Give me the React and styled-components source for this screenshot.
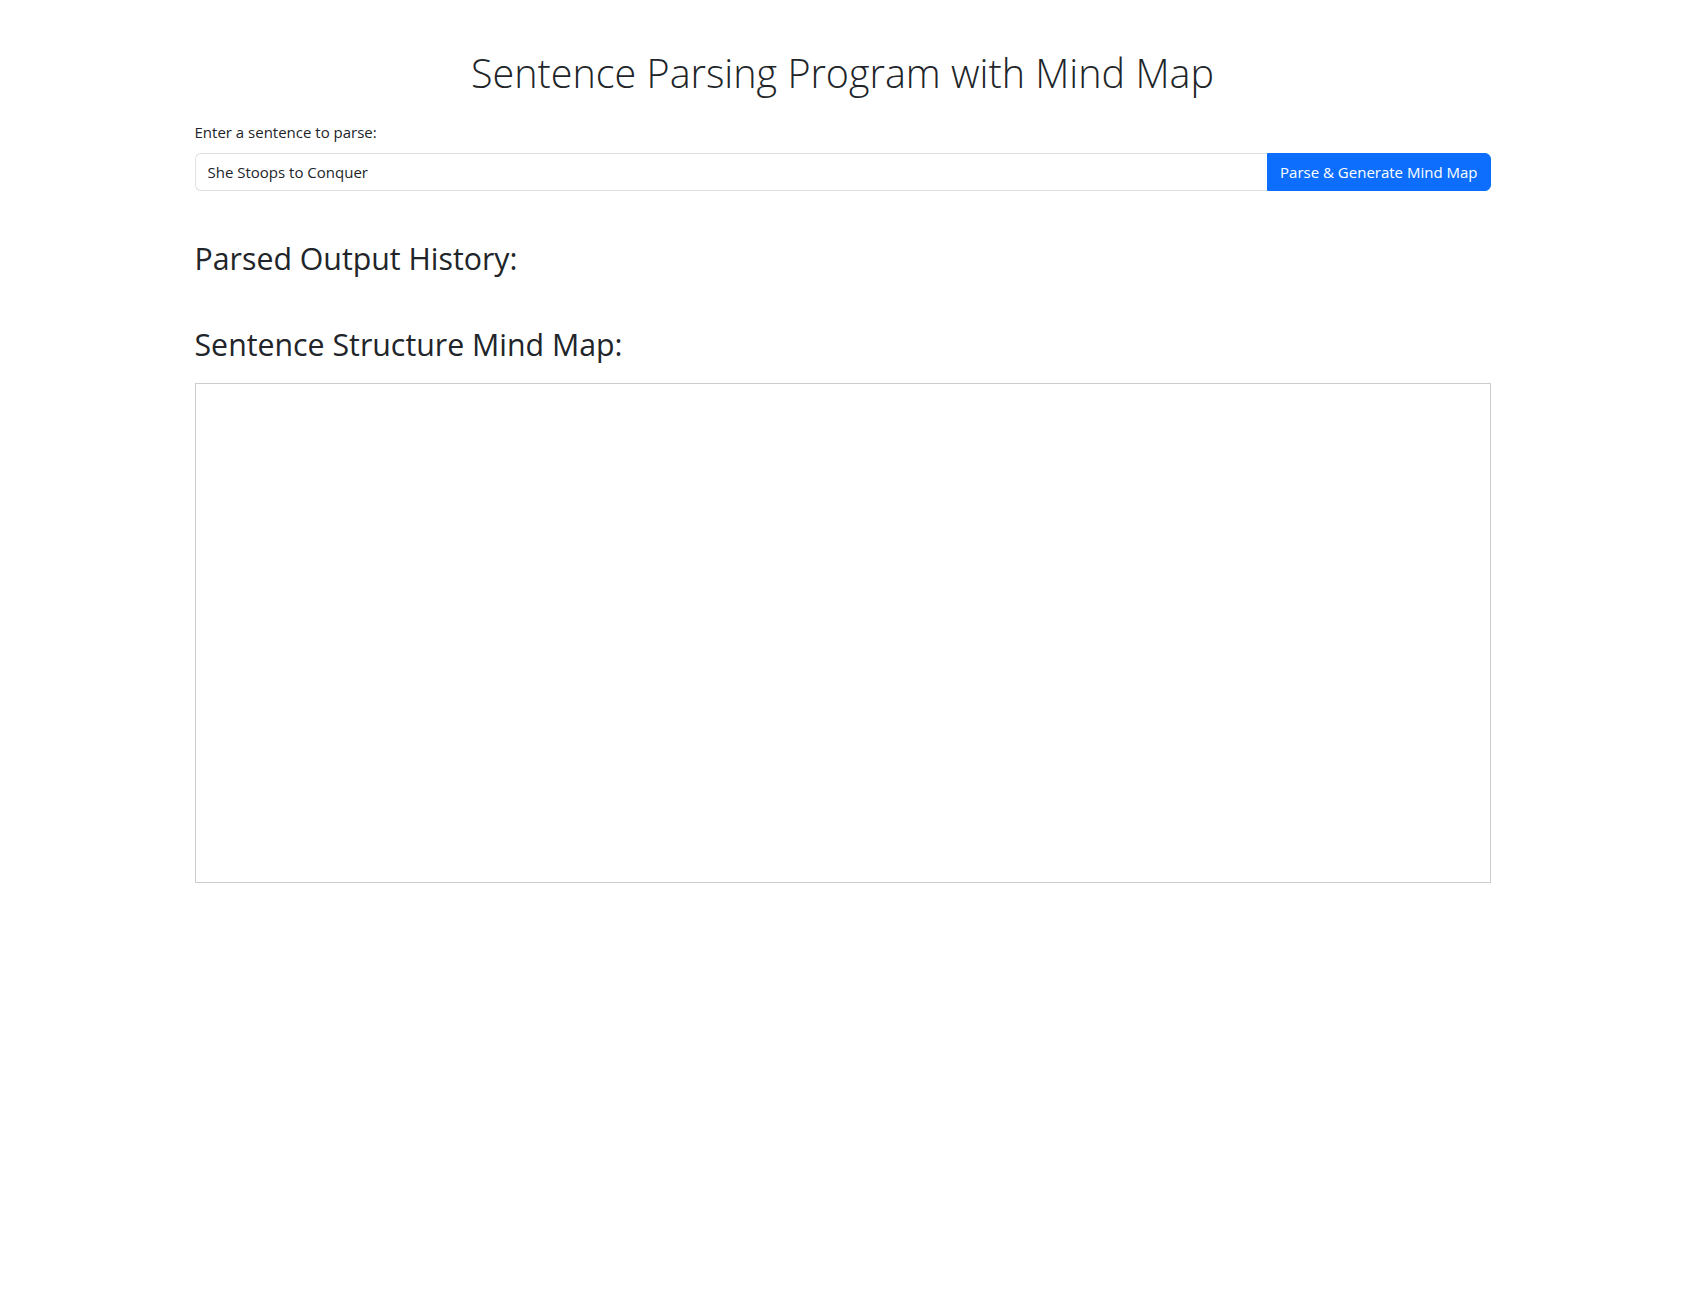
import React, { useState } from 'react'
import styled, { createGlobalStyle } from 'styled-components'

const GlobalStyle = createGlobalStyle`
  *, *::before, *::after {
    box-sizing: border-box;
  }
  body {
    margin: 0;
    background: #fff;
    color: #212529;
    font-family: "Open Sans", "Noto Sans", sans-serif;
    font-size: 16px;
    line-height: 1.5;
  }
`

const Container = styled.div`
  max-width: 1320px;
  margin: 0 auto;
  padding: 50px 12px 0;
`

const Title = styled.h1`
  margin: 0 0 24px;
  text-align: center;
  font-size: 39.5px;
  font-weight: 300;
  line-height: 1.2;
`

const Label = styled.label`
  display: block;
  margin-bottom: 9px;
  font-size: 15px;
`

const InputGroup = styled.div`
  display: flex;
  align-items: stretch;
  margin-bottom: 50px;
`

const Input = styled.input`
  flex: 1;
  min-width: 0;
  height: 38px;
  padding: 6px 12px;
  font: inherit;
  font-size: 15px;
  color: #212529;
  border: 1px solid #dee2e6;
  border-right: none;
  border-radius: 6px 0 0 6px;
  outline: none;
`

const Button = styled.button`
  padding: 6px 12px;
  font: inherit;
  font-size: 15px;
  color: #fff;
  background: #0d6efd;
  border: 1px solid #0d6efd;
  border-radius: 0 6px 6px 0;
  cursor: pointer;
`

const SectionTitle = styled.h3`
  margin: 0 0 ${p => p.$gap}px;
  font-size: 30.3px;
  font-weight: 400;
  line-height: 1.2;
`

const MindMap = styled.div`
  height: 500px;
  border: 1px solid #ccc;
`

export default function App() {
  const [sentence, setSentence] = useState('She Stoops to Conquer')

  return (
    <>
      <GlobalStyle />
      <Container>
        <Title>Sentence Parsing Program with Mind Map</Title>
        <Label htmlFor="sentence">Enter a sentence to parse:</Label>
        <InputGroup>
          <Input id="sentence" value={sentence} onChange={e => setSentence(e.target.value)} />
          <Button>Parse &amp; Generate Mind Map</Button>
        </InputGroup>
        <SectionTitle $gap={50}>Parsed Output History:</SectionTitle>
        <SectionTitle $gap={19}>Sentence Structure Mind Map:</SectionTitle>
        <MindMap />
      </Container>
    </>
  )
}
